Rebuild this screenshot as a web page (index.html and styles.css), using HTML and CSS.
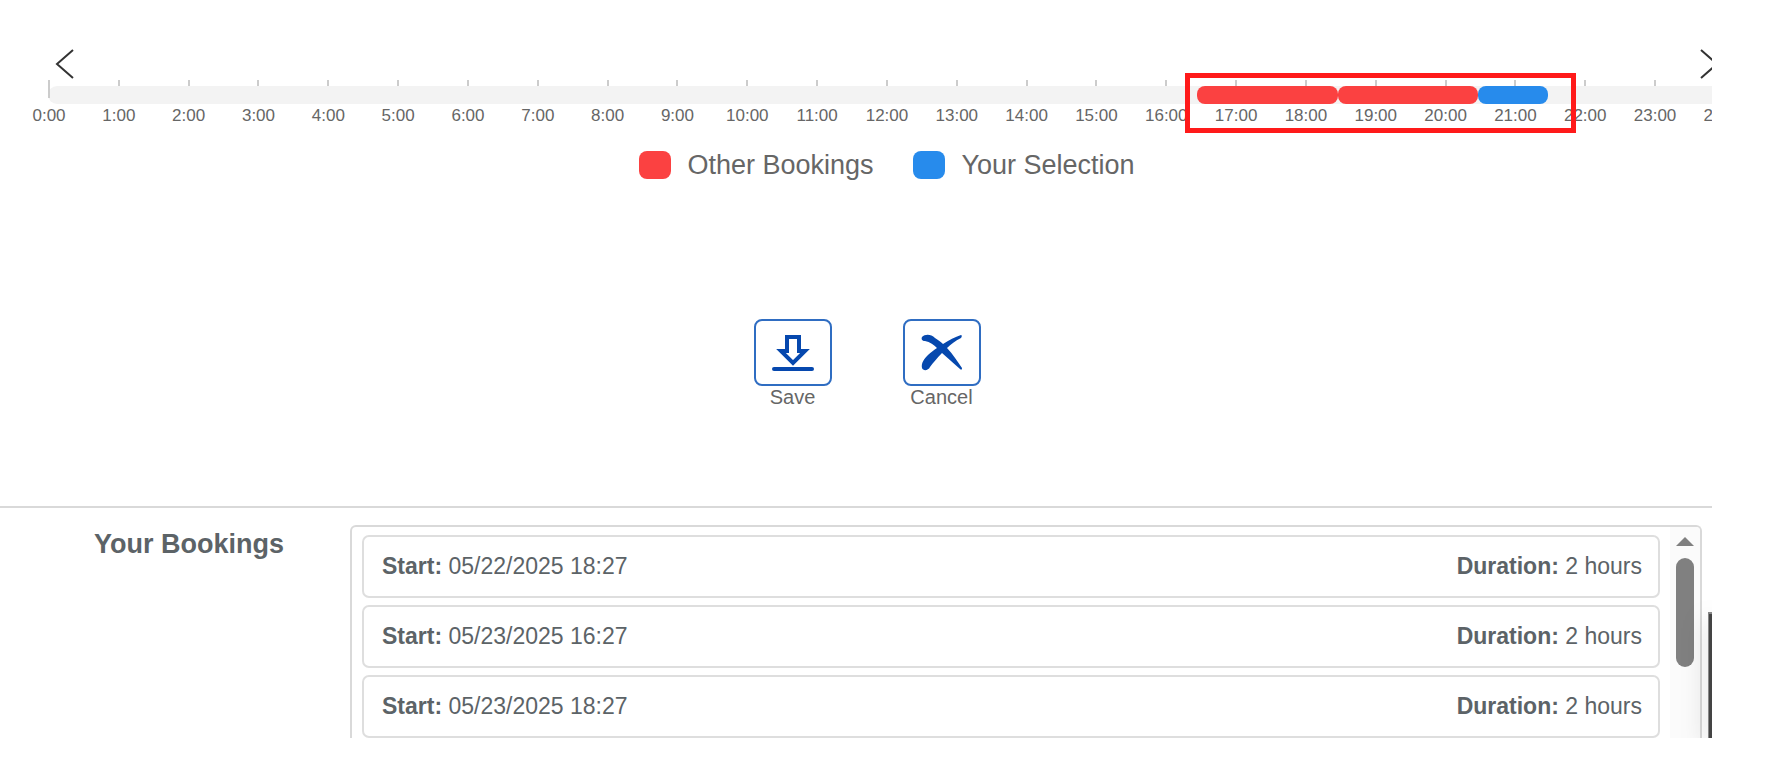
FILE: index.html
```html
<!DOCTYPE html>
<html lang="en">
<head>
  <meta charset="UTF-8">
  <title>Bookings</title>
  <link rel="stylesheet" href="styles.css">
</head>
<body>
  <main class="page">
    <section class="timeline">
      <div class="timeline-nav">
        <button class="arrow" aria-label="Earlier">
          <svg width="20" height="30" viewBox="0 0 20 30"><path d="M18 1 L2 15 L18 29"/></svg>
        </button>
        <button class="arrow" aria-label="Later">
          <svg width="20" height="30" viewBox="0 0 20 30"><path d="M2 1 L18 15 L2 29"/></svg>
        </button>
      </div>
      <div class="ticks">
        <i class="first"></i><i></i><i></i><i></i><i></i><i></i><i></i><i></i><i></i><i></i><i></i><i></i><i></i><i></i><i></i><i></i><i></i><i></i><i></i><i></i><i></i><i></i><i></i><i></i><i></i>
      </div>
      <div class="track">
        <div class="slot other" style="left: 68.5%; width: 8.4%"></div>
        <div class="slot other" style="left: 76.9%; width: 8.33%"></div>
        <div class="slot own" style="left: 85.23%; width: 4.17%"></div>
      </div>
      <div class="hours">
        <span>0:00</span>
        <span>1:00</span>
        <span>2:00</span>
        <span>3:00</span>
        <span>4:00</span>
        <span>5:00</span>
        <span>6:00</span>
        <span>7:00</span>
        <span>8:00</span>
        <span>9:00</span>
        <span>10:00</span>
        <span>11:00</span>
        <span>12:00</span>
        <span>13:00</span>
        <span>14:00</span>
        <span>15:00</span>
        <span>16:00</span>
        <span>17:00</span>
        <span>18:00</span>
        <span>19:00</span>
        <span>20:00</span>
        <span>21:00</span>
        <span>22:00</span>
        <span>23:00</span>
        <span>24:00</span>
      </div>
      <div class="highlight" style="left: 67.76%; width: 23.3%"></div>
      <div class="legend">
        <div class="legend-item"><span class="swatch other"></span>Other Bookings</div>
        <div class="legend-item"><span class="swatch own"></span>Your Selection</div>
      </div>
    </section>

    <div class="actions">
      <div class="action">
        <button id="save" class="icon-button" aria-labelledby="save-label">
          <svg width="42" height="38" viewBox="0 0 42 38">
            <path class="outline" d="M15 3H27V17H33L21 29L9 17H15Z"/>
            <path class="base" d="M2 35H40"/>
          </svg>
        </button>
        <label id="save-label" for="save">Save</label>
      </div>
      <div class="action">
        <button id="cancel" class="icon-button" aria-labelledby="cancel-label">
          <svg width="42" height="38" viewBox="0 0 42 38">
            <path class="solid" d="M1 3C4 0 10 0 14 4C17 6 20 8 22 10C28 6 34 3 40 1C41 1 41 3 40 4C34 7 30 10 26 14C32 20 36 27 41 34C41 36 40 36 39 35C33 30 27 24 21 19C16 24 12 29 9 33C7 37 2 37 1 34C0 29 3 25 7 21C10 18 13 16 16 14C13 11 9 8 4 7C1 7 0 5 1 3Z"/>
          </svg>
        </button>
        <label id="cancel-label" for="cancel">Cancel</label>
      </div>
    </div>

    <section class="bookings">
      <h2>Your Bookings</h2>
      <div class="panel">
        <ul class="list">
          <li><span><b>Start:</b> 05/22/2025 18:27</span><span><b>Duration:</b> 2 hours</span></li>
          <li><span><b>Start:</b> 05/23/2025 16:27</span><span><b>Duration:</b> 2 hours</span></li>
          <li><span><b>Start:</b> 05/23/2025 18:27</span><span><b>Duration:</b> 2 hours</span></li>
        </ul>
        <div class="scrollbar">
          <svg width="18" height="9" viewBox="0 0 18 9"><path d="M9 0L18 9H0Z"/></svg>
          <div class="thumb"></div>
        </div>
      </div>
      <div class="side-window"></div>
    </section>
  </main>
</body>
</html>
```

FILE: styles.css
```css
* {
  box-sizing: border-box;
}

body {
  margin: 0;
  padding: 0 70px 26px 0;
  height: 100vh;
  background: #fff;
  color: #666;
  font-family: Arial, "Liberation Sans", sans-serif;
}

.page {
  display: flex;
  flex-direction: column;
  height: 100%;
  overflow: hidden;
}

button {
  padding: 0;
  background: none;
  border: none;
  cursor: pointer;
}

/* timeline, runs a little past the right edge */
.timeline {
  position: relative;
  flex: none;
  margin: 48px -14px 0 48px;
}

.timeline-nav {
  display: flex;
  justify-content: space-between;
  padding: 0 7px;
  height: 32px;
}

.arrow {
  height: 32px;
}

.arrow svg {
  display: block;
  fill: none;
  stroke: #333;
  stroke-width: 2;
}

.ticks,
.hours {
  display: flex;
  justify-content: space-between;
}

.ticks {
  height: 6px;
}

.ticks i {
  position: relative;
  z-index: 1;
  width: 2px;
  height: 6px;
  background: #ccc;
}

.ticks .first {
  height: 18px;
}

.track {
  position: relative;
  height: 18px;
  background: #f3f3f3;
  border-radius: 9px;
}

.slot {
  position: absolute;
  top: 0;
  height: 18px;
  border-radius: 8px;
}

.other {
  background: #fb4141;
}

.own {
  background: #278bec;
}

.hours {
  padding-top: 2px;
  font-size: 17px;
  line-height: 20px;
}

.hours span {
  display: flex;
  justify-content: center;
  width: 2px;
}

.highlight {
  position: absolute;
  top: 25px;
  height: 60px;
  border: 5px solid #ff1a1a;
  z-index: 2;
}

.legend {
  display: flex;
  justify-content: center;
  gap: 40px;
  margin-top: 24px;
  font-size: 27px;
  line-height: 30px;
}

.legend-item {
  display: flex;
  align-items: center;
  gap: 16px;
}

.swatch {
  width: 32px;
  height: 28px;
  border-radius: 8px;
}

/* save and cancel */
.actions {
  display: flex;
  flex: none;
  justify-content: center;
  gap: 71px;
  padding-left: 22px;
  margin-top: 139px;
  font-size: 20px;
  line-height: 22px;
}

.action {
  display: flex;
  flex-direction: column;
  align-items: center;
  width: 78px;
}

.icon-button {
  display: flex;
  align-items: center;
  justify-content: center;
  width: 78px;
  height: 67px;
  border: 2px solid #2f6dc2;
  border-radius: 8px;
}

.icon-button .outline {
  fill: none;
  stroke: #0648ae;
  stroke-width: 4;
}

.icon-button .base {
  stroke: #0648ae;
  stroke-width: 4;
  stroke-linecap: round;
}

.icon-button .solid {
  fill: #0648ae;
}

/* list of bookings */
.bookings {
  position: relative;
  display: flex;
  flex: 1;
  min-height: 0;
  margin-top: 98px;
  padding: 17px 10px 0 94px;
  border-top: 2px solid #d9d9d9;
  color: #5c6367;
}

.bookings h2 {
  width: 256px;
  margin: 4px 0 0;
  font-size: 27px;
  line-height: 30px;
}

.panel {
  display: flex;
  flex: 1;
  overflow: hidden;
  border: 2px solid #d9d9d9;
  border-bottom: none;
  border-radius: 6px 6px 0 0;
}

.list {
  display: flex;
  flex: 1;
  flex-direction: column;
  gap: 7px;
  margin: 0;
  padding: 8px 10px 0;
  list-style: none;
  font-size: 23px;
}

.list li {
  display: flex;
  flex: none;
  justify-content: space-between;
  height: 63px;
  padding: 0 16px 0 18px;
  border: 2px solid #dedede;
  border-radius: 7px;
  line-height: 58px;
}

.scrollbar {
  display: flex;
  flex-direction: column;
  align-items: center;
  gap: 12px;
  width: 30px;
  padding-top: 10px;
  background: #fbfbfb;
}

.scrollbar svg,
.thumb {
  flex: none;
  fill: #808080;
}

.thumb {
  width: 18px;
  height: 109px;
  background: #808080;
  border-radius: 9px;
}

/* edge of the window lying over the page */
.side-window {
  position: absolute;
  top: 104px;
  right: 0;
  bottom: 0;
  width: 4px;
  background: #444;
  border: solid #888;
  border-width: 2px 0 0 1px;
  box-shadow: 0 8px 24px rgba(0, 0, 0, 0.4);
}
```
